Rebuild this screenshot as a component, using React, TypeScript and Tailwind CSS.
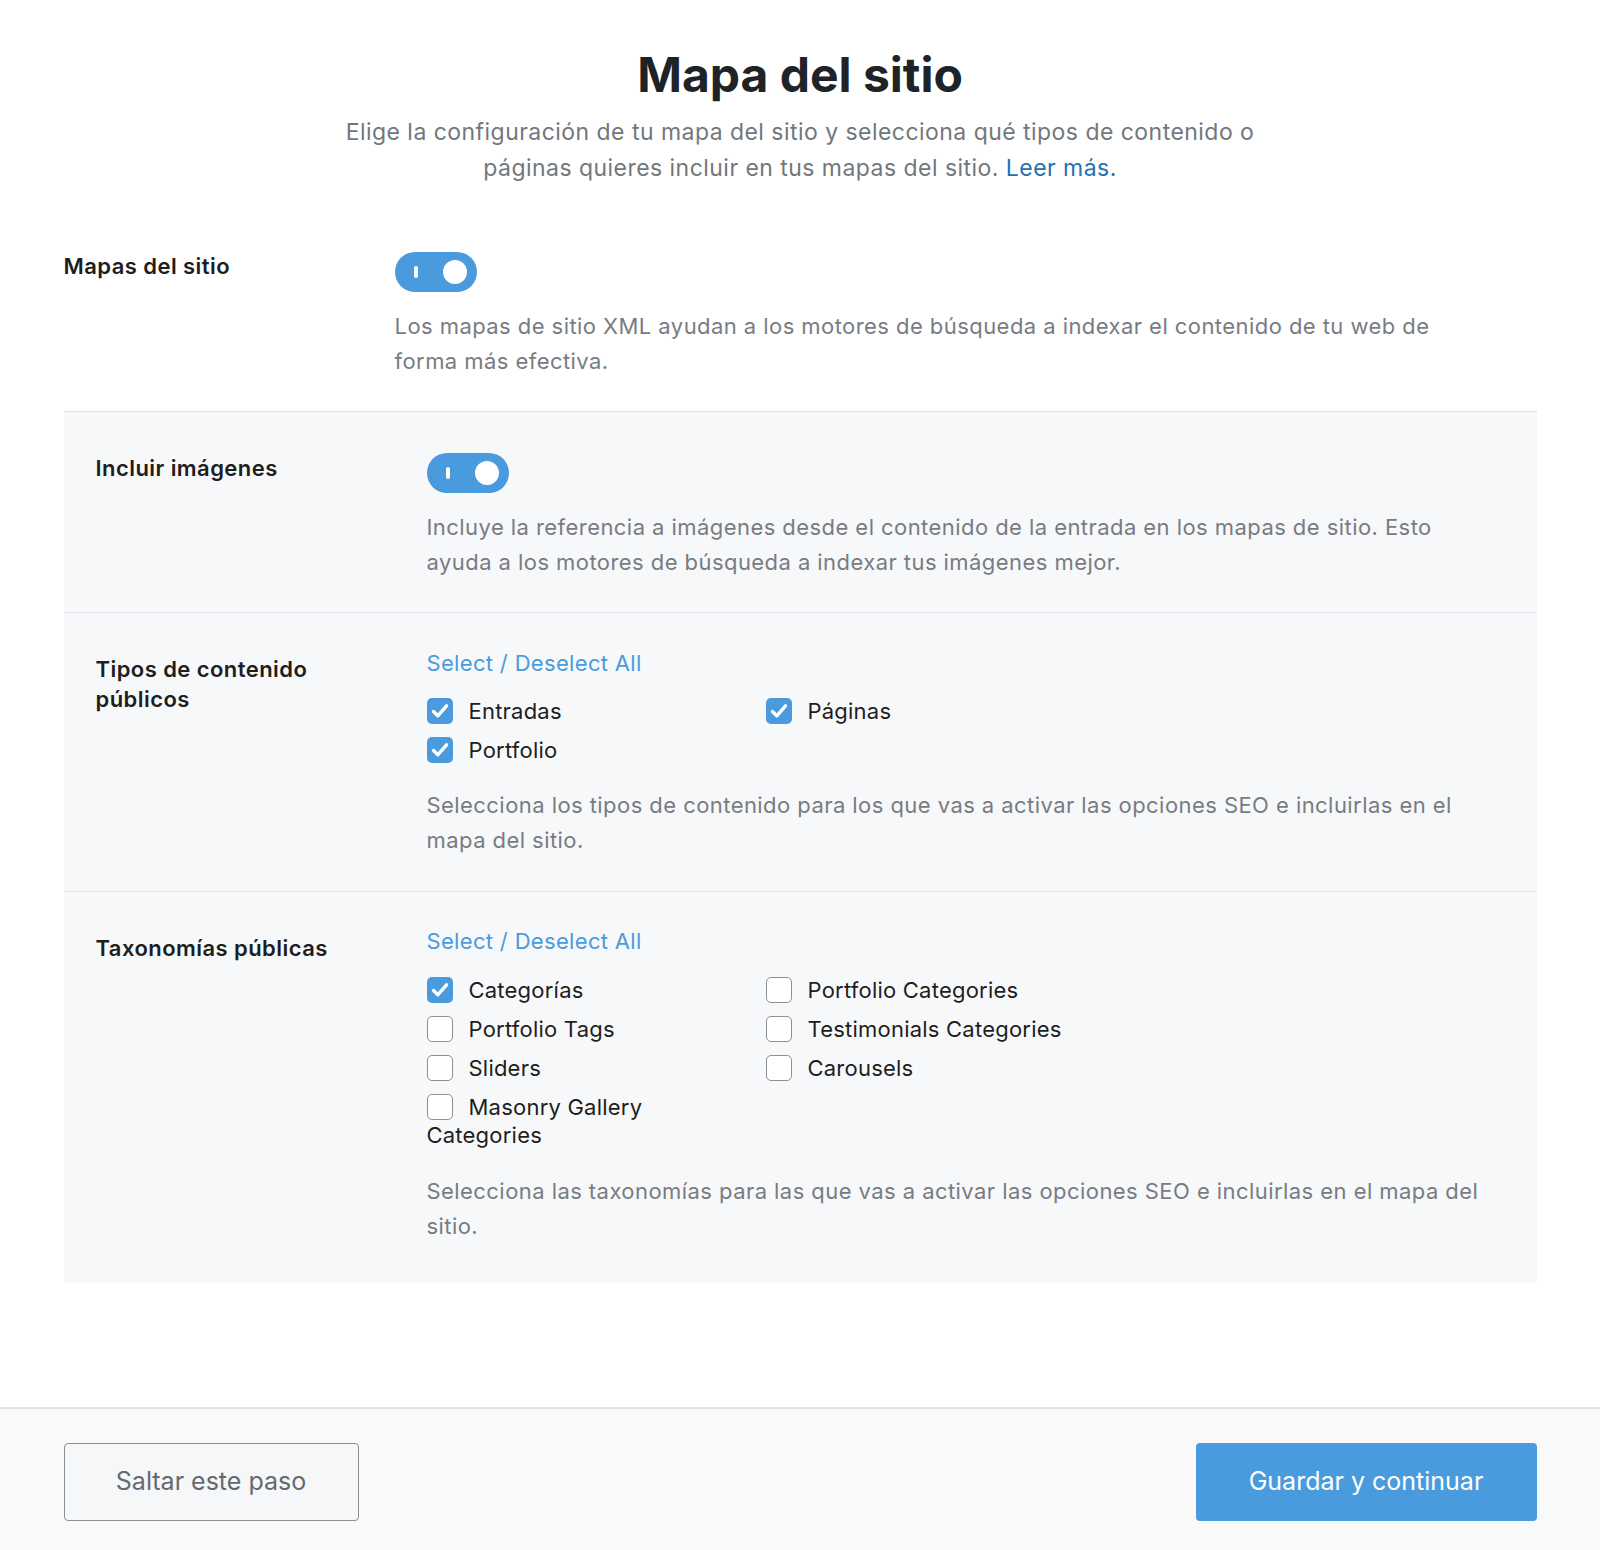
import React from "react";

const font = { fontFamily: "Inter, 'Noto Sans', 'Liberation Sans', sans-serif" };

function Toggle() {
  return (
    <div className="relative h-[40px] w-[82px] rounded-full bg-[#4a9bdd]">
      <span className="absolute left-[19px] top-[14px] h-[12px] w-[4px] rounded-sm bg-white" />
      <span className="absolute right-[10px] top-[8px] h-[24px] w-[24px] rounded-full bg-white" />
    </div>
  );
}

function Check({ checked, label }: { checked: boolean; label: string }) {
  return (
    <div className="text-[22px] leading-[28px] tracking-[0.01em] text-[#1e1e1e]">
      <span className="mr-[16px] inline-block h-[26px] w-[26px] align-[-5px]">
        {checked ? (
          <span className="flex h-[26px] w-[26px] items-center justify-center rounded-[5px] bg-[#4a9bdd]">
            <svg width="26" height="26" viewBox="0 0 26 26" fill="none">
              <path d="M6.5 13.5 L10.8 17.8 L19.5 7.8" stroke="white" strokeWidth="3.4" strokeLinecap="round" strokeLinejoin="round" />
            </svg>
          </span>
        ) : (
          <span className="block h-[26px] w-[26px] rounded-[5px] border-[1.5px] border-[#8c8f94] bg-white" />
        )}
      </span>
      {label}
    </div>
  );
}

function Row({
  label,
  children,
  pad,
  gray,
}: {
  label: React.ReactNode;
  children: React.ReactNode;
  pad: string;
  gray?: boolean;
}) {
  return (
    <div
      className={
        gray
          ? "grid grid-cols-[331px_1fr] border-t border-[#e0e2e6] bg-[#f7f8fa] px-[32px] pt-[41px] " + pad
          : "grid grid-cols-[331px_1fr] " + pad
      }
    >
      <div className="text-[22px] font-semibold leading-[30px] tracking-[0.02em] text-[#1e1e1e]">{label}</div>
      <div className="max-w-[1064px]">{children}</div>
    </div>
  );
}

function Desc({ children, mt }: { children: React.ReactNode; mt: string }) {
  return <p className={"text-[22px] leading-[34.5px] tracking-[0.02em] text-[#787c82] " + mt}>{children}</p>;
}

export default function App() {
  return (
    <div className="min-h-[1550px] bg-white flex flex-col" style={font}>
      <div className="mx-auto w-[1473px]">
        <h1 className="pt-[46px] text-center text-[48px] font-bold leading-[58px] text-[#1d2327]">Mapa del sitio</h1>
        <p className="mx-auto mt-[10px] max-w-[950px] text-center text-[23px] leading-[36px] tracking-[0.02em] text-[#72777c]">
          Elige la configuración de tu mapa del sitio y selecciona qué tipos de contenido o páginas quieres incluir en tus mapas del sitio.{" "}
          <a className="text-[#2271b1]">Leer más.</a>
        </p>

        <div className="mt-[65px]">
          <Row label="Mapas del sitio" pad="pb-[33px]">
            <div className="pt-[1px]">
              <Toggle />
            </div>
            <Desc mt="mt-[17px]">
              Los mapas de sitio XML ayudan a los motores de búsqueda a indexar el contenido de tu web de forma más efectiva.
            </Desc>
          </Row>

          <Row label="Incluir imágenes" gray pad="pb-[33px]">
            <div>
              <Toggle />
            </div>
            <Desc mt="mt-[17px]">
              Incluye la referencia a imágenes desde el contenido de la entrada en los mapas de sitio. Esto ayuda a los motores de búsqueda a indexar tus imágenes mejor.
            </Desc>
          </Row>

          <Row label={<>Tipos de contenido<br />públicos</>} gray pad="pb-[34px]">
            <div className="-mt-[6px]">
              <a className="block text-[22px] leading-[30px] tracking-[0.015em] text-[#4a9bdd]">Select / Deselect All</a>
              <div className="mt-[19px] grid grid-cols-[280px_1fr] gap-x-[59px] gap-y-[11px]">
                <Check checked label="Entradas" />
                <Check checked label="Páginas" />
                <Check checked label="Portfolio" />
              </div>
              <Desc mt="mt-[24px]">
                Selecciona los tipos de contenido para los que vas a activar las opciones SEO e incluirlas en el mapa del sitio.
              </Desc>
            </div>
          </Row>

          <Row label="Taxonomías públicas" gray pad="pb-[40px]">
            <div className="-mt-[7px]">
              <a className="block text-[22px] leading-[30px] tracking-[0.015em] text-[#4a9bdd]">Select / Deselect All</a>
              <div className="mt-[20px] grid grid-cols-[280px_1fr] gap-x-[59px] gap-y-[11px]">
                <Check checked label="Categorías" />
                <Check checked={false} label="Portfolio Categories" />
                <Check checked={false} label="Portfolio Tags" />
                <Check checked={false} label="Testimonials Categories" />
                <Check checked={false} label="Sliders" />
                <Check checked={false} label="Carousels" />
                <Check checked={false} label="Masonry Gallery Categories" />
              </div>
              <Desc mt="mt-[25px]">
                Selecciona las taxonomías para las que vas a activar las opciones SEO e incluirlas en el mapa del sitio.
              </Desc>
            </div>
          </Row>
        </div>
      </div>

      <div className="mt-auto border-t-2 border-[#dde3ea] bg-[#f9f9f9]">
        <div className="mx-auto flex w-[1473px] items-start justify-between pb-[29px] pt-[34px]">
          <button className="h-[78px] w-[295px] rounded-[4px] border border-[#8c8f94] bg-[#f6f7f9] text-[25px] text-[#646970]">
            Saltar este paso
          </button>
          <button className="h-[78px] w-[341px] rounded-[4px] bg-[#4a9bdd] text-[25px] text-white">
            Guardar y continuar
          </button>
        </div>
      </div>
    </div>
  );
}
